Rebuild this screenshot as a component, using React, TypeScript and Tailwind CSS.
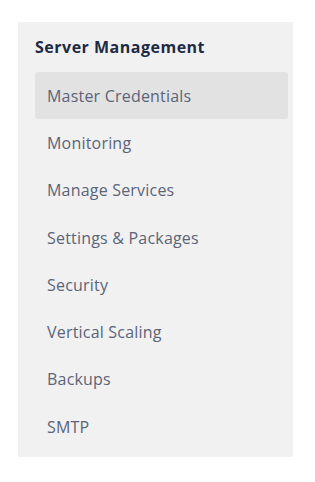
const items = [
  "Master Credentials",
  "Monitoring",
  "Manage Services",
  "Settings & Packages",
  "Security",
  "Vertical Scaling",
  "Backups",
  "SMTP",
]

export default function App() {
  return (
    <div
      className="min-h-screen bg-white pt-[22px] pl-[18px]"
      style={{ fontFamily: "'Open Sans', sans-serif" }}
    >
      <div className="w-[275px] bg-[#f1f1f1] pl-[17px] pr-[5px] pt-[15px] pb-[7px]">
        <h2 className="h-[35px] text-[16px] font-bold leading-[20px] tracking-[0.5px] text-[#1f2a44]">
          Server Management
        </h2>
        <ul>
          {items.map((item, i) => (
            <li
              key={item}
              className={
                "flex h-[47.3px] items-center rounded-[3px] pl-[12px] text-[16px] tracking-[0.2px] text-[#5b6478] " +
                (i === 0 ? "bg-[#e2e2e2]" : "")
              }
            >
              {item}
            </li>
          ))}
        </ul>
      </div>
    </div>
  )
}
